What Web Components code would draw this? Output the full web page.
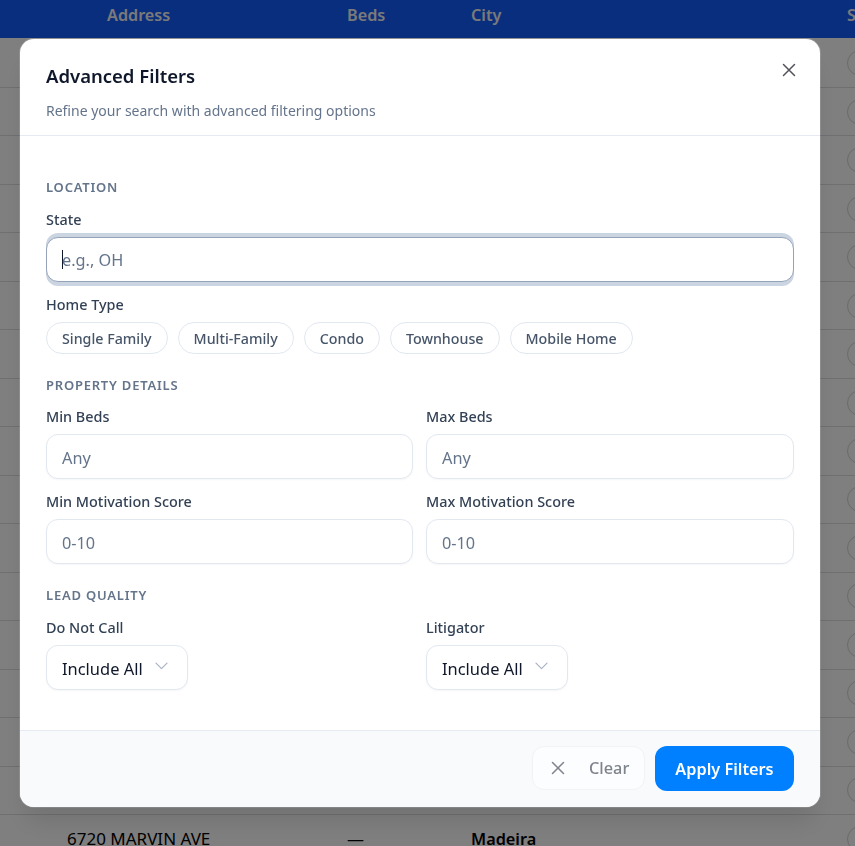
<!DOCTYPE html>
<html lang="en">
<head>
<meta charset="utf-8">
<title>Advanced Filters</title>
<style>
  html, body {
    margin: 0;
    height: 100%;
    overflow: hidden;
    background: #fff;
    font-family: "Noto Sans", "Liberation Sans", sans-serif;
  }
</style>
</head>
<body>
<lead-table></lead-table>
<filter-modal>
  <filter-section title="Location">
    <filter-field label="State"><filter-input placeholder="e.g., OH" focused></filter-input></filter-field>
    <filter-field label="Home Type">
      <chip-group>
        <filter-chip>Single Family</filter-chip>
        <filter-chip>Multi-Family</filter-chip>
        <filter-chip>Condo</filter-chip>
        <filter-chip>Townhouse</filter-chip>
        <filter-chip>Mobile Home</filter-chip>
      </chip-group>
    </filter-field>
  </filter-section>
  <filter-section title="Property Details">
    <field-grid>
      <filter-field label="Min Beds"><filter-input placeholder="Any"></filter-input></filter-field>
      <filter-field label="Max Beds"><filter-input placeholder="Any"></filter-input></filter-field>
      <filter-field label="Min Motivation Score"><filter-input placeholder="0-10"></filter-input></filter-field>
      <filter-field label="Max Motivation Score"><filter-input placeholder="0-10"></filter-input></filter-field>
    </field-grid>
  </filter-section>
  <filter-section title="Lead Quality">
    <field-grid>
      <filter-field label="Do Not Call"><filter-select value="Include All"></filter-select></filter-field>
      <filter-field label="Litigator"><filter-select value="Include All"></filter-select></filter-field>
    </field-grid>
  </filter-section>
</filter-modal>

<script>
  // Small helper, every element is a shadow root with its own style
  class ShadowElement extends HTMLElement {
    constructor( html ) {
      super();
      this.attachShadow( {mode: 'open'} );
      this.shadowRoot.innerHTML = html;
    }
  }

  // Table behind the dialog
  class LeadTable extends ShadowElement {
    constructor() {
      super( /* template */ `
        <style>
          :host {
            display: block;
            color: #000;
          }

          header {
            box-sizing: border-box;
            display: grid;
            grid-template-columns: 240px 124px 376px auto;
            height: 38px;
            padding-left: 107px;
            align-items: center;
            background: #155dfc;
            color: #f4f4f4;
            font-size: 16.2px;
            font-weight: 600;
            white-space: nowrap;
            padding-bottom: 8px;
          }

          #rows {
            padding-top: 1.5px;
          }

          .row {
            box-sizing: border-box;
            display: grid;
            grid-template-columns: 280px 124px 376px auto;
            height: 48.47px;
            padding-left: 67px;
            align-items: center;
            border-bottom: 1px solid #dedee2;
            font-size: 17px;
            white-space: nowrap;
          }

          .city {
            font-size: 16.3px;
            font-weight: 600;
          }

          .circle {
            box-sizing: border-box;
            width: 26px;
            height: 26px;
            border: 1px solid #d4d4d8;
            border-radius: 50%;
          }
        </style>
        <header><span>Address</span><span>Beds</span><span>City</span><span>Status</span></header>
        <div id="rows"></div>
      ` );

      const $rows = this.shadowRoot.querySelector( '#rows' );

      // Rows under the dialog stay empty, only the last one can be read
      for( let r = 0; r < 17; r++ ) {
        const last = r === 16;
        const $row = document.createElement( 'div' );
        $row.className = 'row';
        $row.innerHTML = `
          <span>${last ? '6720 MARVIN AVE' : ''}</span>
          <span>${last ? '—' : ''}</span>
          <span class="city">${last ? 'Madeira' : ''}</span>
          <span class="circle"></span>
        `;
        $rows.appendChild( $row );
      }
    }
  }
  customElements.define( 'lead-table', LeadTable );

  // Dialog with header, scroll body and footer
  class FilterModal extends ShadowElement {
    constructor() {
      super( /* template */ `
        <style>
          :host {
            position: fixed;
            inset: 0;
            display: block;
            background: rgba( 0, 0, 0, 0.5 );
          }

          .dialog {
            position: absolute;
            left: 20px;
            top: 39px;
            width: 800px;
            height: 768px;
            display: flex;
            flex-direction: column;
            background: #fff;
            border-radius: 14px;
            overflow: hidden;
            box-shadow: 0 20px 25px -5px rgba( 0, 0, 0, 0.1 ), 0 0 0 1px rgba( 255, 255, 255, 0.15 );
          }

          header {
            position: relative;
            box-sizing: border-box;
            height: 97px;
            padding: 24px 26px 0 26px;
            border-bottom: 1px solid #e6eaf2;
          }

          h2 {
            margin: 0;
            color: #0f172a;
            font-size: 18.5px;
            line-height: 25px;
            font-weight: 600;
          }

          p {
            margin: 13px 0 0 0;
            color: #64748b;
            font-size: 14px;
            line-height: 20px;
          }

          .close {
            position: absolute;
            right: 24px;
            top: 24px;
            width: 14px;
            height: 14px;
            color: #52525b;
          }

          main {
            flex: 1;
            box-sizing: border-box;
            padding: 43px 26px 0 26px;
            display: flex;
            flex-direction: column;
            gap: 23px;
          }

          footer {
            box-sizing: border-box;
            height: 77px;
            padding: 15px 26px 0 26px;
            display: flex;
            justify-content: flex-end;
            gap: 10px;
            background: #f8fafc;
            border-top: 1px solid #e6eaf2;
          }

          button {
            box-sizing: border-box;
            height: 45px;
            border-radius: 12px;
            font: inherit;
            font-size: 16.3px;
            display: flex;
            align-items: center;
            padding: 0;
          }

          .clear {
            width: 113px;
            height: 44px;
            padding: 0 0 0 18px;
            gap: 24px;
            background: #fcfdfe;
            border: 1px solid #f1f3f7;
            color: #7f838c;
            font-weight: 500;
          }

          .clear svg {
            width: 14px;
            height: 14px;
          }

          .apply {
            width: 139px;
            padding-top: 1px;
            justify-content: center;
            background: #007fff;
            border: 0;
            color: #fff;
            font-weight: 600;
          }
        </style>
        <div class="dialog">
          <header>
            <h2>Advanced Filters</h2>
            <p>Refine your search with advanced filtering options</p>
            <svg class="close" viewBox="0 0 14 14" fill="none" stroke="currentColor" stroke-width="1.5" stroke-linecap="round">
              <path d="M1.5 1.5 12.5 12.5M12.5 1.5 1.5 12.5"/>
            </svg>
          </header>
          <main><slot></slot></main>
          <footer>
            <button class="clear" type="button">
              <svg viewBox="0 0 14 14" fill="none" stroke="currentColor" stroke-width="1.5" stroke-linecap="round">
                <path d="M1.5 1.5 12.5 12.5M12.5 1.5 1.5 12.5"/>
              </svg>
              Clear
            </button>
            <button class="apply" type="button">Apply Filters</button>
          </footer>
        </div>
      ` );
    }
  }
  customElements.define( 'filter-modal', FilterModal );

  class FilterSection extends ShadowElement {
    constructor() {
      super( /* template */ `
        <style>
          :host {
            display: flex;
            flex-direction: column;
            gap: 13px;
          }

          h3 {
            margin: 0 0 0.5px 0;
            color: #64748b;
            font-size: 13px;
            line-height: 17px;
            font-weight: 600;
            letter-spacing: 0.78px;
            text-transform: uppercase;
          }
        </style>
        <h3></h3>
        <slot></slot>
      ` );
    }

    connectedCallback() {
      this.shadowRoot.querySelector( 'h3' ).textContent = this.getAttribute( 'title' );
    }
  }
  customElements.define( 'filter-section', FilterSection );

  class FieldGrid extends ShadowElement {
    constructor() {
      super( /* template */ `
        <style>
          :host {
            display: grid;
            grid-template-columns: 367px 368px;
            column-gap: 13px;
            row-gap: 13px;
          }
        </style>
        <slot></slot>
      ` );
    }
  }
  customElements.define( 'field-grid', FieldGrid );

  class FilterField extends ShadowElement {
    constructor() {
      super( /* template */ `
        <style>
          :host {
            display: flex;
            flex-direction: column;
            gap: 8px;
            align-items: stretch;
          }

          label {
            color: #334155;
            font-size: 14.4px;
            line-height: 19px;
            font-weight: 500;
          }
        </style>
        <label></label>
        <slot></slot>
      ` );
    }

    connectedCallback() {
      this.shadowRoot.querySelector( 'label' ).textContent = this.getAttribute( 'label' );
    }
  }
  customElements.define( 'filter-field', FilterField );

  class FilterInput extends ShadowElement {
    constructor() {
      super( /* template */ `
        <style>
          :host {
            box-sizing: border-box;
            display: flex;
            align-items: center;
            height: 45px;
            padding: 2px 15px 0 15px;
            background: #fff;
            border: 1px solid #e2e8f0;
            border-radius: 12px;
            color: #64748b;
            font-size: 16.3px;
            box-shadow: 0 1px 2px rgba( 15, 23, 42, 0.04 );
          }

          /* The focus ring is clipped at the sides by the scroll body */
          :host( [focused] ) {
            border-color: #94a3b8;
            box-shadow: 0 -4px 0 #cbd5e1, 0 4px 0 #cbd5e1;
          }

          i {
            display: none;
            width: 1px;
            height: 19px;
            margin: -2px -1px 0 0;
            background: #0f172a;
          }

          :host( [focused] ) i {
            display: block;
          }
        </style>
        <i></i><span></span>
      ` );
    }

    connectedCallback() {
      this.shadowRoot.querySelector( 'span' ).textContent = this.getAttribute( 'placeholder' );
    }
  }
  customElements.define( 'filter-input', FilterInput );

  class FilterSelect extends ShadowElement {
    constructor() {
      super( /* template */ `
        <style>
          :host {
            box-sizing: border-box;
            align-self: flex-start;
            display: flex;
            align-items: center;
            height: 45px;
            padding: 0 19px 0 15px;
            gap: 12px;
            background: #fff;
            border: 1px solid #e2e8f0;
            border-radius: 12px;
            color: #0f172a;
            font-size: 16.45px;
            box-shadow: 0 1px 2px rgba( 15, 23, 42, 0.04 );
          }

          span {
            margin-top: 3px;
          }

          svg {
            width: 13px;
            height: 8px;
            margin-top: -2px;
          }
        </style>
        <span></span>
        <svg viewBox="0 0 13 8" fill="none" stroke="#a8b3c4" stroke-width="1.2" stroke-linecap="round" stroke-linejoin="round">
          <path d="M1 1.2 6.5 6.7 12 1.2"/>
        </svg>
      ` );
    }

    connectedCallback() {
      this.shadowRoot.querySelector( 'span' ).textContent = this.getAttribute( 'value' );
    }
  }
  customElements.define( 'filter-select', FilterSelect );

  class ChipGroup extends ShadowElement {
    constructor() {
      super( /* template */ `
        <style>
          :host {
            display: flex;
            gap: 10px;
          }
        </style>
        <slot></slot>
      ` );
    }
  }
  customElements.define( 'chip-group', ChipGroup );

  class FilterChip extends ShadowElement {
    constructor() {
      super( /* template */ `
        <style>
          :host {
            box-sizing: border-box;
            display: flex;
            align-items: center;
            height: 32px;
            padding: 1px 15px 0 15px;
            border: 1px solid #e2e8f0;
            border-radius: 16px;
            background: #fff;
            color: #475569;
            font-size: 14.25px;
            font-weight: 500;
            white-space: nowrap;
          }
        </style>
        <slot></slot>
      ` );
    }
  }
  customElements.define( 'filter-chip', FilterChip );
</script>
</body>
</html>
